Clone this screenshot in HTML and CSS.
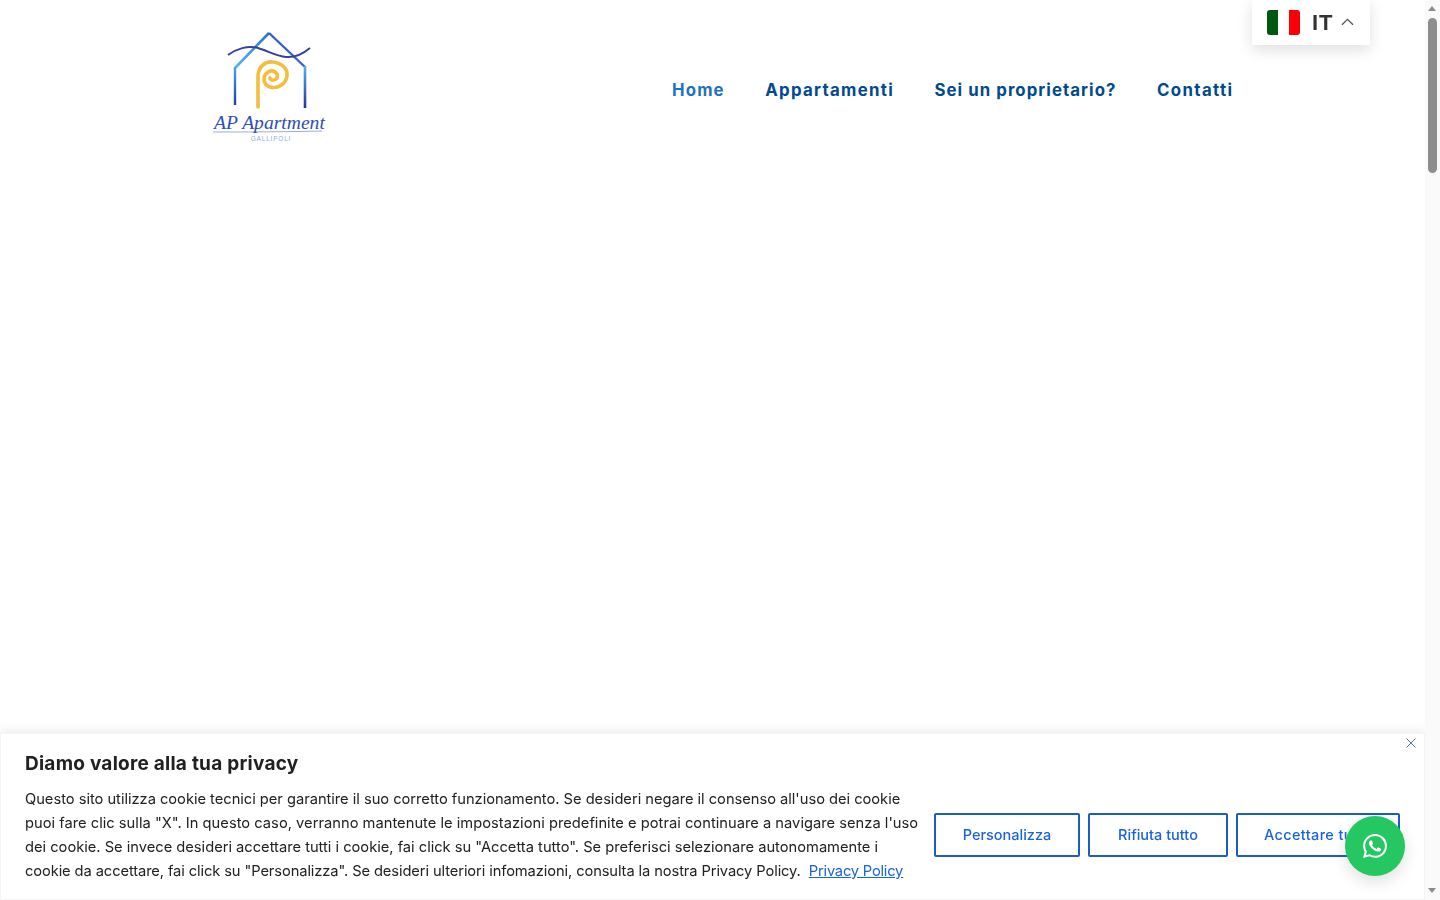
FILE: index.html
```html
<!DOCTYPE html>
<html lang="it">
<head>
<meta charset="utf-8">
<title>AP Apartment Gallipoli</title>
<link rel="stylesheet" href="styles.css">
</head>
<body>
<div class="viewport">
  <header class="site-header">
    <a class="logo" href="#" aria-label="AP Apartment Gallipoli">
      <svg class="logo-svg" width="120" height="114" viewBox="0 0 120 114" xmlns="http://www.w3.org/2000/svg">
        <defs>
          <linearGradient id="roofL" gradientUnits="userSpaceOnUse" x1="25" y1="39" x2="59" y2="4"><stop offset="0" stop-color="#57b9ec"/><stop offset="1" stop-color="#2d73c9"/></linearGradient>
          <linearGradient id="roofR" gradientUnits="userSpaceOnUse" x1="59" y1="4" x2="95" y2="38"><stop offset="0" stop-color="#2f5cbc"/><stop offset="1" stop-color="#3d63c6"/></linearGradient>
          <linearGradient id="wallL" gradientUnits="userSpaceOnUse" x1="25" y1="38" x2="25" y2="76"><stop offset="0" stop-color="#45a6e4"/><stop offset="1" stop-color="#2a3aa4"/></linearGradient>
          <linearGradient id="wallR" gradientUnits="userSpaceOnUse" x1="95" y1="37" x2="95" y2="79"><stop offset="0" stop-color="#52b2e8"/><stop offset="1" stop-color="#27329c"/></linearGradient>
        </defs>
        <g class="logo-art">
          <path d="M25 39 L59 4" fill="none" stroke="url(#roofL)" stroke-width="2.6"/>
          <path d="M59 4 L95 38" fill="none" stroke="url(#roofR)" stroke-width="2.4"/>
          <path d="M25 38 L25 76" fill="none" stroke="url(#wallL)" stroke-width="2.4"/>
          <path d="M95 37 L95 79" fill="none" stroke="url(#wallR)" stroke-width="2.6"/>
          <path d="M18 26 C26 20 38 16 48 19 C58 22 66 27 76 28 C86 29 94 24 100 19" fill="none" stroke="#37409f" stroke-width="2"/>
          <path d="M48 78 L48 46 C49 37 56 32 63 33 C72 34 78 40 77 47 C76 55 68 60 60 58 C53 56 52 47 58 43 C63 40 69 44 67 49 C65 52 61 52 60 49" fill="none" stroke="#f4bd3c" stroke-width="3.6" stroke-linecap="round"/>
        </g>
        <text class="logo-script" x="4" y="100">AP Apartment</text>
        <path d="M3 103 C30 103 70 103 112 102" fill="none" stroke="#3a56b8" stroke-width=".5"/>
        <text class="logo-small" x="61" y="112" text-anchor="middle">GALLIPOLI</text>
      </svg>
    </a>
    <nav class="main-nav">
      <a class="nav-link is-active" href="#">Home</a>
      <a class="nav-link link-apt" href="#">Appartamenti</a>
      <a class="nav-link link-owner" href="#">Sei un proprietario?</a>
      <a class="nav-link link-contact" href="#">Contatti</a>
    </nav>
  </header>

  <div class="lang-switch">
    <span class="flag"><i class="flag-g"></i><i class="flag-w"></i><i class="flag-r"></i></span>
    <span class="lang-code">IT</span>
    <svg class="lang-caret" width="13" height="8" viewBox="0 0 13 8"><path d="M1 6.8 L6.5 1.3 L12 6.8" fill="none" stroke="#555" stroke-width="1.3"/></svg>
  </div>

  <section class="cookie-banner">
    <button class="cookie-close" aria-label="Chiudi">
      <svg width="10" height="10" viewBox="0 0 10 10"><path d="M.5 .5 L9.5 9.5 M9.5 .5 L.5 9.5" stroke="#5a6f9c" stroke-width="1" fill="none"/></svg>
    </button>
    <div class="cookie-text">
      <h2 class="cookie-title">Diamo valore alla tua privacy</h2>
      <p class="cookie-desc">
        <span class="line line-1">Questo sito utilizza cookie tecnici per garantire il suo corretto funzionamento. Se desideri negare il consenso all'uso dei cookie</span>
        <span class="line line-2">puoi fare clic sulla "X". In questo caso, verranno mantenute le impostazioni predefinite e potrai continuare a navigare senza l'uso</span>
        <span class="line line-3">dei cookie. Se invece desideri accettare tutti i cookie, fai click su "Accetta tutto". Se preferisci selezionare autonomamente i</span>
        <span class="line line-4">cookie da accettare, fai click su "Personalizza". Se desideri ulteriori infomazioni, consulta la nostra Privacy Policy. <a class="cookie-link" href="#">Privacy Policy</a></span>
      </p>
    </div>
    <div class="cookie-actions">
      <button class="cookie-btn btn-custom">Personalizza</button>
      <button class="cookie-btn btn-reject">Rifiuta tutto</button>
      <button class="cookie-btn btn-accept">Accettare tutto</button>
    </div>
  </section>

  <a class="whatsapp" href="#" aria-label="WhatsApp">
    <svg width="24" height="24" viewBox="0 0 24 24"><path fill="#fff" d="M17.472 14.382c-.297-.149-1.758-.867-2.03-.967-.273-.099-.471-.148-.67.15-.197.297-.767.966-.94 1.164-.173.199-.347.223-.644.075-.297-.15-1.255-.463-2.39-1.475-.883-.788-1.48-1.761-1.653-2.059-.173-.297-.018-.458.13-.606.134-.133.298-.347.446-.52.149-.174.198-.298.298-.497.099-.198.05-.371-.025-.52-.075-.149-.669-1.612-.916-2.207-.242-.579-.487-.5-.669-.51-.173-.008-.371-.01-.57-.01-.198 0-.52.074-.792.372-.272.297-1.04 1.016-1.04 2.479 0 1.462 1.065 2.875 1.213 3.074.149.198 2.096 3.2 5.077 4.487.709.306 1.262.489 1.694.625.712.227 1.36.195 1.871.118.571-.085 1.758-.719 2.006-1.413.248-.694.248-1.289.173-1.413-.074-.124-.272-.198-.57-.347m-5.421 7.403h-.004a9.87 9.87 0 01-5.031-1.378l-.361-.214-3.741.982.998-3.648-.235-.374a9.86 9.86 0 01-1.51-5.26c.001-5.45 4.436-9.884 9.888-9.884 2.64 0 5.122 1.03 6.988 2.898a9.825 9.825 0 012.893 6.994c-.003 5.45-4.437 9.884-9.885 9.884m8.413-18.297A11.815 11.815 0 0012.05 0C5.495 0 .16 5.335.157 11.892c0 2.096.547 4.142 1.588 5.945L.057 24l6.305-1.654a11.882 11.882 0 005.683 1.448h.005c6.554 0 11.89-5.335 11.893-11.893a11.821 11.821 0 00-3.48-8.413z"/></svg>
  </a>

  <aside class="scrollbar" aria-hidden="true">
    <span class="sb-arrow sb-up"></span>
    <span class="sb-thumb"></span>
    <span class="sb-arrow sb-down"></span>
  </aside>
</div>
</body>
</html>
```

FILE: styles.css
```css
* { box-sizing: border-box; }
html, body { margin: 0; padding: 0; background: #fff; }
body { font-family: Inter, "Noto Sans", sans-serif; color: #212121; }

.viewport { height: 900px; overflow: hidden; }

.site-header { display: flex; align-items: flex-start; padding: 29px 0 0 210px; }
.logo { display: block; width: 120px; height: 114px; }
.logo-svg { display: block; }
.logo-art { filter: blur(.3px); }
.logo-script { font-family: "Liberation Serif", serif; font-style: italic; font-size: 19.6px; fill: #2f4fb0; }
.logo-small { font-family: "Liberation Sans", sans-serif; font-size: 6.5px; fill: #8fb0e0; letter-spacing: .8px; }

.main-nav { display: flex; gap: 40.5px; margin: 51px 0 0 342px; }
.nav-link { font-size: 16.8px; font-weight: 700; line-height: 20px; letter-spacing: 1.15px; color: #004a8f; text-decoration: none; white-space: nowrap; }
.nav-link.is-active { color: #1e73be; }
.link-apt { letter-spacing: 1.3px; }
.link-owner { letter-spacing: 1.05px; }
.link-contact { letter-spacing: 1.4px; }

.lang-switch { position: fixed; top: 0; right: 70px; width: 118px; height: 45px; background: #fff; display: flex; align-items: center; padding: 0 0 0 15px; box-shadow: 0 5px 15px rgba(0,0,0,.13); }
.flag { display: flex; width: 33px; height: 25px; border-radius: 3px; overflow: hidden; }
.flag i { flex: 1; display: block; }
.flag-g { background: #00570f; }
.flag-w { background: #fff; }
.flag-r { background: #fb0007; }
.lang-code { font-family: "Liberation Sans", sans-serif; margin-left: 12px; font-size: 22px; font-weight: 700; letter-spacing: 1px; color: #333; line-height: 45px; }
.lang-caret { margin-left: 7px; margin-top: -2px; }

.cookie-banner { position: fixed; left: 0; right: 15px; bottom: 0; height: 167px; background: #fff; border: 1px solid #f4f4f4; box-shadow: 0 -1px 10px rgba(172,171,171,.3); display: flex; align-items: flex-start; padding: 18px 24px 0; }
.cookie-close { position: absolute; top: 3px; right: 7px; width: 12px; height: 12px; padding: 1px; background: none; border: 0; display: flex; }
.cookie-text { flex: none; width: 909px; }
.cookie-title { margin: 0 0 11px; font-size: 19px; letter-spacing: .25px; line-height: 24px; font-weight: 700; color: #212121; }
.cookie-desc { margin: 0; font-size: 14.7px; line-height: 24px; color: #212121; white-space: nowrap; }
.line { display: block; }
.line-1 { letter-spacing: -.025px; }
.line-2 { letter-spacing: .015px; }
.line-3 { letter-spacing: -.01px; }
.line-4 { letter-spacing: -.1px; }
.cookie-link { color: #1863dc; margin-left: 4px; letter-spacing: -.2px; }
.cookie-actions { display: flex; gap: 8px; margin-top: 61px; }
.cookie-btn { height: 44px; background: #fff; border: 2px solid #1b5cc6; border-radius: 2px; color: #1863dc; font-family: inherit; font-size: 14.5px; font-weight: 500; padding: 0 0 2px; white-space: nowrap; }
.btn-custom { width: 146px; }
.btn-reject { width: 140px; }
.btn-accept { width: 164px; letter-spacing: .35px; }

.whatsapp { position: fixed; left: 1345px; top: 816px; width: 60px; height: 60px; border-radius: 50%; background: #25c763; display: flex; align-items: center; justify-content: center; box-shadow: 0 6px 16px rgba(0,0,0,.12); }

.scrollbar { position: fixed; top: 0; right: 0; bottom: 0; width: 15px; background: #fafafa; }
.sb-arrow { position: absolute; left: 3px; width: 0; height: 0; border-left: 4.5px solid transparent; border-right: 4.5px solid transparent; }
.sb-up { top: 6px; border-bottom: 5px solid #8c8c8c; }
.sb-down { bottom: 7px; border-top: 5px solid #8c8c8c; }
.sb-thumb { position: absolute; top: 18px; left: 3px; width: 9px; height: 155px; border-radius: 5px; background: #8e8e8e; }
```
